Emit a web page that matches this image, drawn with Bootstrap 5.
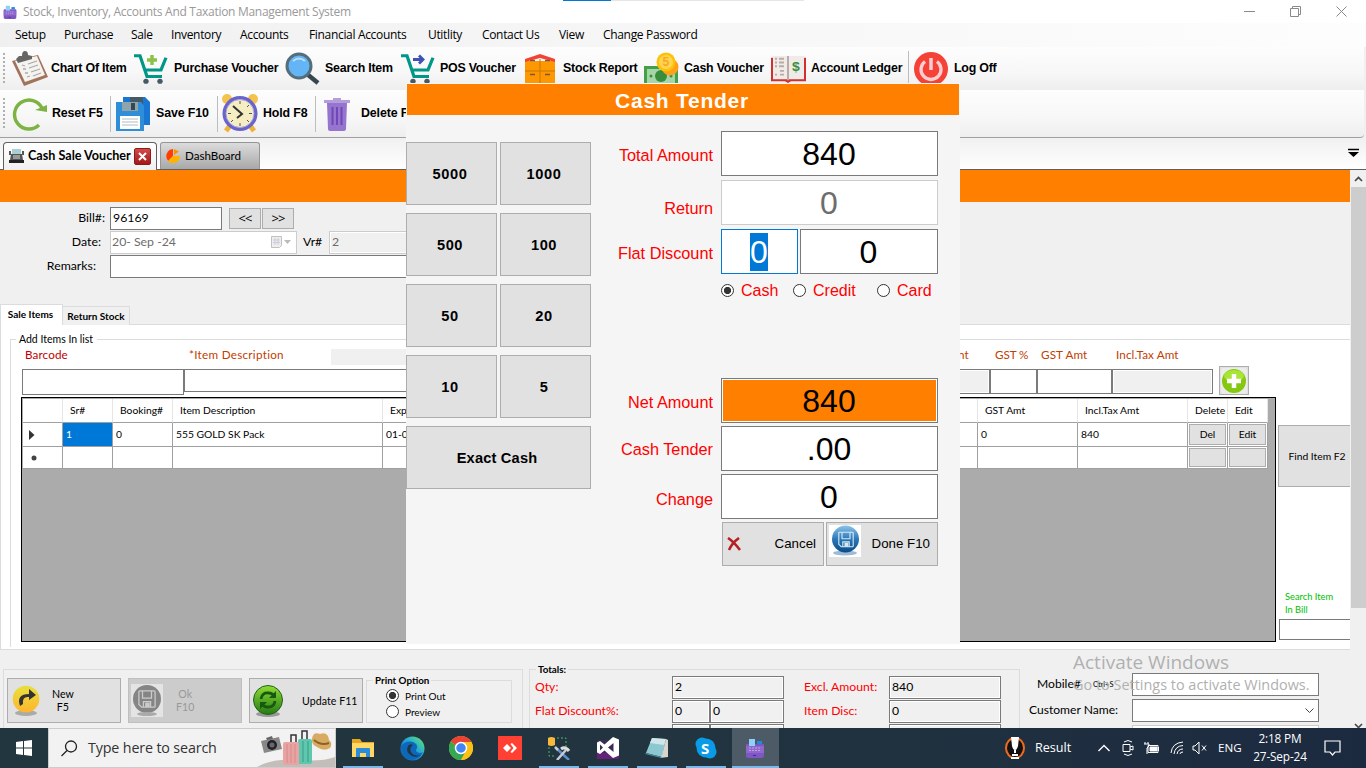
<!DOCTYPE html>
<html lang="en">
<head>
<meta charset="utf-8">
<meta name="viewport" content="width=device-width, initial-scale=1">
<title>Stock, Inventory, Accounts And Taxation Management System</title>
<link href="https://cdn.jsdelivr.net/npm/bootstrap@5.3.0/dist/css/bootstrap.min.css" rel="stylesheet">
<style>
:root{--ui:"Open Sans","Noto Sans",sans-serif;--cal:Lato,"Open Sans",sans-serif;--ms:"Liberation Sans",Arial,sans-serif;--or:#ff8000}
html,body{width:1366px;height:768px;overflow:hidden}
body{font:12.3px/1 var(--cal);color:#000;background:#f0f0f0;margin:0}
svg{display:block;flex:none}
.screen{width:1366px;height:768px}
.titlebar{height:23px;background:#fff;font:12px/1 var(--ui);letter-spacing:-.29px;color:#999;padding-left:3px}
.loadline{left:563px;top:0;width:241px;height:1px;background:linear-gradient(90deg,#0078d7 48px,#e5e5e5 48px)}
.winbtns{margin-left:auto;margin-right:19px;gap:35px}
.menubar{height:24px;padding-left:15px;background:linear-gradient(90deg,#f0f0f0,#fdfdfd);font:12px/1 var(--ui);letter-spacing:-.33px;display:grid;grid-template-columns:49px 67px 40px 69px 69px 119px 54px 77px 44px 120px;align-items:center;white-space:nowrap}
.toolrow{background:linear-gradient(#fdfdfd,#f7f7f7 60%,#eee);font:bold 12.4px/1 var(--ms);letter-spacing:-.22px;white-space:nowrap;width:1364px}
.bar2{letter-spacing:-.12px}
.toolrow .ico{width:40px}
.bar1{height:43px;display:grid;grid-template-columns:11px 122px 152px 115px 123px 121px 127px 137px 6px 1fr}
.bar2{height:48px;border-bottom:1px solid #a0a0a0;border-radius:0 0 4px 0}
.grip{margin-left:3px;height:31px;background:repeating-linear-gradient(#b0b0b0 0 2px,transparent 2px 4px);width:2px}
.tsep{width:1px;height:36px;background:#bdbdbd}
.tabstrip{height:32px;background:linear-gradient(#f0f0f0,#fff);border-bottom:1px solid #5f5f5f;padding:4px 6px 0 3px}
.tab-a{width:154px;height:28px;margin-bottom:-1px;border:1px solid #5f5f5f;border-bottom:0;border-radius:4px 4px 0 0;background:linear-gradient(#fff,#f0f0f0);font:bold 12.6px/1 var(--cal);padding-left:5px}
.tab-b{width:100px;height:27px;margin-left:3px;border:1px solid #969696;border-bottom:0;border-radius:3px 3px 0 0;background:linear-gradient(#dcdcdc,#a8a8a8);padding-left:5px;font:11.6px/1 var(--cal)}
.closebox{width:17px;height:17px;background:linear-gradient(#d24a4a,#a31818);border:1px solid #8b1a1a;border-radius:2px}
.work{height:558px}
.page{width:1350px;background:#f0f0f0;overflow:hidden}
.vscroll{width:16px;background:#f0f0f0}
.thumb{width:15px;height:421px;background:#cdcdcd}
.band{height:32px;background:var(--or);width:1350px;margin-bottom:5px}
.frm{height:23px;margin-bottom:1px;white-space:nowrap}
.lab{text-align:right;width:110px}
.nav-b{font:13px/1 var(--ui);letter-spacing:-1px}
.box{border:1px solid #7a7a7a;background:#fff;display:flex;align-items:center;padding:0 0 0 2px;flex:none}
.ro{background:#f0f0f0;box-shadow:inset 0 0 0 1px #fff}
.dis{border-color:#ccc;color:#6d6d6d}
.b{border:1px solid #adadad;background:#e1e1e1;display:flex;align-items:center;justify-content:center;padding:0;color:#000;flex:none}
.stabs{margin-top:26px;height:21px;font:bold 10px/1 var(--cal)}
.stab1{width:63px;height:21px;background:#fff;border:1px solid #dcdcdc;border-bottom:0;padding:0 2px 3px 0}
.stab2{width:67px;height:19px;background:#f0f0f0;border:1px solid #dcdcdc;border-left:0;border-bottom:0;padding-bottom:1px}
.panel{height:326px;background:#fff;border-bottom:1px solid #dcdcdc;border-left:1px solid #dcdcdc;margin-top:-1px;border-top:1px solid #dcdcdc}
.grp{margin:0 0 0 9px;height:322px;padding-left:1px;background:linear-gradient(#dcdcdc,#dcdcdc) 0 14px/1px 100% no-repeat}
.grp-t{height:28px;font-size:10.5px;width:1340px}
.grp-t:before{content:"";width:5px;height:1px;background:#dcdcdc;margin-right:3px}
.grp-t:after{content:"";flex:1;height:1px;background:#dcdcdc;margin-left:4px}
.flab{height:22px;color:#c04000;font-size:11.7px;letter-spacing:.1px;display:grid;grid-template-columns:164px 142px 627px 37px 46px 75px 100px;padding-left:14px;white-space:nowrap;margin-top:-9px}
.fields{height:31px;padding:3px 0 0 11px}
.dg{margin-left:10px;width:1255px;height:245px;border:1px solid #000;background:#ababab;font-size:10.3px;padding:1px;flex:none}
.dgr{display:grid;grid-template-columns:40px 50px 60px 210px 595px 100px 110px 40px 40px;width:1246px;white-space:nowrap}
.dgr>div{border-right:1px solid #a0a0a0;border-bottom:1px solid #a0a0a0;background:#fff;display:flex;align-items:center;padding-left:3px;overflow:hidden}
.dgh>div{border-right-color:#e5e5e5;padding-left:7px}
.dgr .pb{padding:1px}
.find{width:72px;height:62px;margin-top:28px;border-right:0;font-size:10.3px;padding-left:5px;white-space:nowrap}
.lower{height:78px;padding:19px 0 0 3px;overflow:hidden}
.gb{border:1px solid #dcdcdc;height:80px;flex:none}
.bb{width:114px;height:45px;font-size:10.6px}
.po{width:146px;height:43px;border:1px solid #dcdcdc;font-size:10px;margin:10px 0 0 3px;padding-left:8px}
.leg{background:#f0f0f0;font-weight:bold;font-size:9.8px;line-height:10px;width:max-content;padding:0 2px;margin-top:-6px;white-space:nowrap}
.rd{width:13px;height:13px;border:1px solid #333;border-radius:50%;background:#fff;flex:none}
.rd.on{background:radial-gradient(circle,#333 0 3.2px,#fff 4px)}
.tg{display:grid;grid-template-columns:137px 112px 105px 112px;row-gap:1px;grid-auto-rows:23px;align-items:center;color:#f00;font-size:12.2px;margin-top:2px;padding-left:5px;white-space:nowrap}
.tg .box{height:23px;color:#000;align-self:stretch}
.tg .gap{padding-left:20px}
.cust{margin-left:8px;width:290px;font-size:12.1px;padding-top:4px;white-space:nowrap}
.wm{left:1073px;top:652px;color:#b0b0b0;font-family:var(--ui);white-space:nowrap;pointer-events:none;z-index:5}
.wm .a1{font-size:19px;line-height:20px}
.wm .a2{font-size:14.4px;line-height:20px;margin-top:3px;letter-spacing:.02px}
/* cash tender dialog */
.tender{left:406px;top:83px;width:554px;height:561px;background:#f5f5f5;z-index:10;font-family:var(--ms);padding:1px}
.tender h1{height:31px;background:var(--or);color:#fff;font:bold 21px/1 var(--ms);letter-spacing:.75px;margin:0;padding-top:2px}
.keys{display:grid;grid-template-columns:91px 91px;gap:8px 3px;grid-auto-rows:63px;margin:27px 0 0 -1px;width:185px}
.keys .b{font:bold 14.6px/1 var(--ms);letter-spacing:.6px;padding:2px 3px 0 0}
.keys .wide{grid-column:span 2;letter-spacing:.2px}
.pay{width:217px;margin:16px 0 0 8px}
.plabs{width:122px;color:#f00;font-size:16.3px;text-align:right;white-space:nowrap;padding-top:16px}
.plabs div{height:45px;display:flex;align-items:center;justify-content:flex-end}
.num{height:45px;font-size:32px;justify-content:center;padding:0 1px 0 0}
.modes{color:#f00;font-size:16px;height:20px}
.taskbar{height:40px;background:linear-gradient(90deg,#22363f,#21343f 50%,#1c2a40);color:#fff;font-family:var(--ui)}
.search{width:288px;height:40px;background:#f2f2f2;border:1px solid #ccc;color:#333;font-size:14.3px;letter-spacing:-.15px;padding-left:12px}
.app{width:49px;height:40px;display:flex;align-items:center;justify-content:center;flex:none}
.run{box-shadow:inset 0 -2px #76b9ed;width:40px;margin:0 4.5px}
.act{background:#4d5b66;width:47px;margin:0 0 0 1px}
</style>
</head>
<body>
<svg width="0" height="0" class="position-absolute"><defs>
<linearGradient id="bl" x2="0" y2="1"><stop stop-color="#8cc4e8"/><stop offset=".5" stop-color="#2c78b8"/><stop offset="1" stop-color="#0b4a86"/></linearGradient>
<linearGradient id="ye" x2="0" y2="1"><stop stop-color="#e8e03c"/><stop offset="1" stop-color="#ffb52e"/></linearGradient>
<linearGradient id="gn" x2="0" y2="1"><stop stop-color="#8fdc35"/><stop offset="1" stop-color="#257a14"/></linearGradient>
<linearGradient id="ed" x1="0" y1="1" x2="1" y2="0"><stop stop-color="#0c59a4"/><stop offset=".5" stop-color="#1b9de2"/><stop offset="1" stop-color="#66eb6e"/></linearGradient>
<symbol id="reg" viewBox="0 0 20 20"><path d="M1 7q0-1 1-1h16q1 0 1 1v11q0 2-2 2H3q-2 0-2-2z" fill="#7e57c2"/><path d="M1 8h18v7H1z" fill="#9068cc"/><path d="M4 1h6v7H4z" fill="#8fd0fb"/><path d="M12 3h5v3h-5z" fill="#1e88e5"/><path d="M4 10h12M4 12.500h12" stroke="#b9a3e3" stroke-dasharray="2 1"/><path d="M8 17h3v1H8z" fill="#4527a0"/></symbol>
<symbol id="cart" viewBox="0 0 35 33" preserveAspectRatio="none"><path d="M1 3h6l7 22h15M12 18h16L33 5" fill="none" stroke="#009688" stroke-width="3.200"/><circle cx="13" cy="30" r="2.700" fill="#455a64"/><circle cx="27" cy="30" r="2.700" fill="#455a64"/></symbol>
<symbol id="disk" viewBox="0 0 20 20"><path d="M2 1h16q1 0 1 1v16q0 1-1 1H4l-3-3V2q0-1 1-1zM5 1v8h10V1M6 19v-6h8v6" fill="none" stroke="currentColor" stroke-width="1.400"/><path d="M8 14h5v5H8z" fill="currentColor"/></symbol>
</defs></svg>

<div class="screen d-flex flex-column position-relative">
  <header class="titlebar d-flex align-items-center">
    <svg width="14" height="14"><use href="#reg"/></svg><span style="margin-left:6px">Stock, Inventory, Accounts And Taxation Management System</span>
    <div class="winbtns d-flex align-items-center"><svg width="11" height="11" stroke="#8a8a8a" fill="none"><path d="M0 5.500h11"/></svg><svg width="11" height="11" stroke="#8a8a8a" fill="none"><path d="M.5 2.500h8v8h-8zM2.500 2V.5h8v8H9"/></svg><svg width="11" height="11" stroke="#8a8a8a" fill="none"><path d="M.5.5l10 10M10.500.5l-10 10"/></svg></div>
    <div class="loadline position-absolute"></div>
  </header>
  <nav class="menubar"><span>Setup</span><span>Purchase</span><span>Sale</span><span>Inventory</span><span>Accounts</span><span>Financial Accounts</span><span>Utitlity</span><span>Contact Us</span><span>View</span><span>Change Password</span></nav>

  <div class="toolrow bar1 align-items-center">
    <div class="grip"></div>
    <div class="d-flex align-items-center"><div class="ico"><svg width="38" height="37" viewBox="0 0 38 37"><path d="M1 11L27 5l10 22-24 9z" fill="#a1735b"/><path d="M4 11l22-5 8 19-20 7z" fill="#f5f3f0"/><path d="M5 9l3-3 3 0q0-5 3-5t3 4l4 1 0 3-14 4z" fill="#666"/><path d="M11 15l3 1M17 14l9-3M12 19l3 0M18 18l9-3M14 23l3 0M20 22l9-3M16 27l3-1M22 26l8-3" stroke="#aaa" stroke-width="1.300"/></svg></div>Chart Of Item</div>
    <div class="d-flex align-items-center"><div class="ico"><svg width="35" height="31"><use href="#cart" width="35" height="31"/><path d="M19 2v10M14 7h10" stroke="#8bc34a" stroke-width="3.500"/></svg></div><span style="margin-left:1px">Purchase Voucher</span></div>
    <div class="d-flex align-items-center"><div class="ico"><svg width="35" height="35"><path d="M22 23l11 9" stroke="#37474f" stroke-width="4.500"/><circle cx="14" cy="15" r="12" fill="#64b5f6" stroke="#546e7a" stroke-width="3"/><path d="M8 10q6-5 12 0" stroke="#bbdefb" stroke-width="2" fill="none"/></svg></div>Search Item</div>
    <div class="d-flex align-items-center"><div class="ico"><svg width="35" height="31"><use href="#cart" width="35" height="31"/><path d="M13 6.500h10M19 2.500l4 4-4 4" stroke="#3f51b5" stroke-width="2.800" fill="none"/></svg></div>POS Voucher</div>
    <div class="d-flex align-items-center"><div class="ico"><svg width="31" height="30" style="margin-left:2px"><path d="M0 7h30v25H0z" fill="#ff9800"/><path d="M0 8V5l15-5 15 5v3L15 4z" fill="#f44336"/><path d="M15 5v27M0 17h30" stroke="#c77600"/><path d="M5 6.500h5M20 6.500h5M5 20.500h5M20 20.500h5" stroke="#795548" stroke-width="1.500"/></svg></div>Stock Report</div>
    <div class="d-flex align-items-center"><div class="ico"><svg width="35" height="34"><path d="M0 14h34v20H0z" fill="#43a047"/><path d="M3 17h28v17H3z" fill="#a5d6a7"/><circle cx="17" cy="24" r="6" fill="#388e3c"/><circle cx="7" cy="24" r="1.500" fill="#388e3c"/><circle cx="27" cy="24" r="1.500" fill="#388e3c"/><circle cx="26" cy="15" r="8.500" fill="#ff9f1a"/><circle cx="22" cy="10" r="9.500" fill="#ffc107"/><circle cx="22" cy="10" r="7" fill="#ffd54f"/><text x="18.500" y="14" font-size="12" fill="#f9a825">5</text></svg></div>Cash Voucher</div>
    <div class="d-flex align-items-center"><div class="ico"><svg width="36" height="28" viewBox="1 0 36 30" preserveAspectRatio="none"><path d="M0 3h36v25H21l-3 2-3-2H0z" fill="#d32f2f"/><path d="M3 1h14v25H3zM19 1h15v25H19z" fill="#efebe9"/><path d="M17 1h2v26h-2z" fill="#bcaaa4"/><path d="M5 4h2M9 4h5M5 8h2M9 8h5M5 12h2M9 12h5M5 21h2M10 17h4M10 21h4" stroke="#bcaaa4" stroke-width="2"/><text x="22" y="17" font-size="14" fill="#388e3c">$</text></svg></div>Account Ledger</div>
    <div class="tsep"></div>
    <div class="d-flex align-items-center"><div class="ico"><svg width="34" height="34"><circle cx="17" cy="17" r="17" fill="#f44336"/><path d="M11 9.500a10 10 0 1 0 12 0" stroke="#ffcdd2" stroke-width="3.300" fill="none"/><path d="M17 6v12" stroke="#ffcdd2" stroke-width="3.500"/></svg></div>Log Off</div>
  </div>
  <div class="toolrow bar2 d-flex align-items-center">
    <div class="grip me-1"></div>
    <div class="ico" style="margin-left:3px"><svg width="36" height="35" viewBox="1 0 36 35"><path d="M28 29a14.500 14.500 0 1 1 3-17" stroke="#7cb342" stroke-width="3.400" fill="none"/><path d="M24 14l12-5v-2v9z" fill="#7cb342"/></svg></div><span style="width:58px">Reset F5</span>
    <div class="tsep me-1"></div><div class="ico ms-1"><svg width="34" height="34" viewBox="0 0 34 34" style="margin-left:-3px"><path d="M7 0h22l5 5v23H7z" fill="#1976d2"/><path d="M14 0h13v7H14z" fill="#455a64"/><path d="M0 5h25l3 4v25H0z" fill="#2f8ed8"/><path d="M6 5h16v9H6z" fill="#90a4ae"/><path d="M15 6h4v7h-4z" fill="#37474f"/><path d="M4 19h20v13H4z" fill="#fff"/><path d="M6 22h16M6 25h16M6 28h16" stroke="#b0bec5"/></svg></div><span style="width:57px;margin-left:-3px">Save F10</span>
    <div class="tsep" style="margin-left:4px"></div><div class="ico" style="margin:0 2px 0 3px"><svg width="38" height="39"><circle cx="6" cy="5" r="5" fill="#f4c34d"/><circle cx="32" cy="5" r="5" fill="#f4c34d"/><path d="M5 37l5-7M33 37l-5-7" stroke="#efb33d" stroke-width="5"/><circle cx="19" cy="19.500" r="17.500" fill="#6a63c9"/><circle cx="19" cy="19.500" r="14" fill="#f5eec2" stroke="#a9a3e6"/><path d="M12 12l9 8-5 4" stroke="#333" stroke-width="2" fill="none"/><path d="M19 7v3M19 29v3M7 19.500h3M28 19.500h3M28 11l-2 2M10 28l2-2M28 28l-2-2" stroke="#555"/></svg></div><span style="width:52px">Hold F8</span>
    <div class="tsep"></div><div class="ico" style="margin-left:8px;width:37px"><svg width="26" height="34"><path d="M3 6h20l-1 26q0 2-2 2H6q-2 0-2-2z" fill="#9575cd"/><path d="M0 3h26v3H0zM9 1h8v3H9z" fill="#b39ddb"/><path d="M8.500 10v18M13 10v18M17.500 10v18" stroke="#7347b8" stroke-width="2"/></svg></div><span>Delete F</span>
  </div>
  <div class="tabstrip d-flex">
    <div class="tab-a d-flex align-items-center"><svg width="15" height="15"><path d="M3 0h9v5H3z" fill="#a9cfd4"/><path d="M0 2h2v4H0zM13 2h2v4h-2zM2 5h11l1 6H1z" fill="#555"/><path d="M0 11h15v3H0z" fill="#222"/><path d="M4 7h7M4 9h7" stroke="#ddd"/></svg><span style="width:110px;padding-left:4px;white-space:nowrap">Cash Sale Voucher</span><div class="closebox d-flex align-items-center justify-content-center"><svg width="9" height="9"><path d="M1 1l7 7M8 1L1 8" stroke="#fff" stroke-width="2"/></svg></div></div>
    <div class="tab-b d-flex align-items-center"><svg width="14" height="14"><path d="M7 7V0a7 7 0 0 0-4.500 12z" fill="#ff3d00"/><path d="M7 7l-5 5A7 7 0 0 0 14 7z" fill="#ffb300"/><path d="M8 6V0l5 2.500z" fill="#ff9100"/></svg><span style="padding-left:5px">DashBoard</span></div>
    <svg class="ms-auto mt-1" width="13" height="13"><path d="M1 3.500h11" stroke="#000" stroke-width="1.500"/><path d="M1 6h11l-5.500 5z"/></svg>
  </div>

  <main class="work d-flex">
    <div class="page">
      <div class="band"></div>
      <div class="frm d-flex align-items-center"><span class="lab" style="padding-right:5px">Bill#:</span><div class="box h-100" style="width:112px">96169</div><button class="b nav-b" style="width:32px;height:21px;margin-left:7px">&lt;&lt;</button><button class="b nav-b" style="width:32px;height:21px;margin-left:1px">&gt;&gt;</button></div>
      <div class="frm d-flex align-items-center"><span class="lab" style="padding-right:9px">Date:</span><div class="box dis h-100" style="width:187px;padding-left:1px">20- Sep -24<svg class="ms-auto me-1" width="22" height="13"><path d="M1.500.5h10v9l-2 2h-8z" fill="#eee" stroke="#c5bfc0"/><path d="M3 4h7M3 6.500h7M5 2v7M8 2v7" stroke="#ccd"/><path d="M14 4h7l-3.500 4z" fill="#bbb"/></svg></div><span style="width:32px;padding-left:6px">Vr#</span><div class="box dis ro h-100" style="width:200px">2</div></div>
      <div class="frm d-flex align-items-center"><span class="lab" style="padding-right:14px">Remarks:</span><div class="box h-100" style="width:400px"></div></div>
      <div class="stabs d-flex align-items-end"><div class="stab1 d-flex align-items-center justify-content-center">Sale Items</div><div class="stab2 d-flex align-items-center justify-content-center">Return Stock</div></div>
      <div class="panel d-flex">
        <div style="width:1277px">
          <div class="grp">
            <div class="grp-t d-flex align-items-center">Add Items In list</div>
            <div class="flab align-items-center"><span style="color:#c00000">Barcode</span><span style="letter-spacing:.27px">*Item Description</span><div style="height:16px;background:#f0f0f0;width:100px;margin-top:3px"></div><span>nt</span><span style="letter-spacing:-.1px">GST %</span><span>GST Amt</span><span>Incl.Tax Amt</span></div>
            <div class="fields d-flex"><div class="box" style="width:162px;height:26px"></div><div class="box" style="width:600px;height:23px"></div><div class="box ro" style="width:206px;height:25px"></div><div class="box" style="width:47px;height:25px"></div><div class="box" style="width:75px;height:25px"></div><div class="box ro" style="width:101px;height:25px"></div><div class="b" style="width:30px;height:29px;margin:-3px 0 0 6px"><svg width="26" height="26"><rect width="26" height="26" rx="3" fill="#ececec"/><circle cx="13" cy="13" r="12" fill="#84c810"/><ellipse cx="13" cy="8" rx="10" ry="6" fill="#a9e534"/><path d="M13 6v14M6 13h14" stroke="#fff" stroke-width="4.500"/></svg></div></div>
            <div class="dg" >
              <div class="dgr dgh" style="grid-auto-rows:24px"><div></div><div>Sr#</div><div>Booking#</div><div>Item Description</div><div>Exp</div><div>GST Amt</div><div>Incl.Tax Amt</div><div>Delete</div><div>Edit</div></div>
              <div class="dgr" style="grid-auto-rows:24px"><div style="padding-left:6px"><svg width="6" height="10"><path d="M0 0l5.500 5L0 10z" fill="#333"/></svg></div><div style="background:#0078d7;color:#fff">1</div><div>0</div><div>555 GOLD SK Pack</div><div>01-0</div><div>0</div><div>840</div><div class="pb"><span class="b w-100 h-100">Del</span></div><div class="pb"><span class="b w-100 h-100">Edit</span></div></div>
              <div class="dgr" style="grid-auto-rows:22px"><div style="padding-left:8px"><svg width="6" height="6"><circle cx="3" cy="3" r="2.500" fill="#444"/></svg></div><div></div><div></div><div></div><div></div><div></div><div></div><div class="pb"><span class="b w-100 h-100"></span></div><div class="pb"><span class="b w-100 h-100"></span></div></div>
            </div>
          </div>
        </div>
        <div style="padding-top:72px"><div class="b find">Find Item F2</div><div style="margin:103px 0 0 7px;color:#00c000;font-size:9.3px;line-height:13px">Search Item<br>In Bill</div><div class="box" style="width:76px;height:21px;margin:3px 0 0 1px"></div></div>
      </div>
      <div class="lower d-flex">
        <div class="gb d-flex" style="width:520px;padding-left:3px">
          <div class="b bb justify-content-start" style="margin-top:8px"><svg class="ms-1" width="30" height="34"><ellipse cx="14" cy="29" rx="11" ry="3" fill="#aaa"/><circle cx="14" cy="15" r="13.300" fill="url(#ye)"/><path d="M8 22q-4-12 9-12V5l7 6-7 5v-3q-7-1-6 7z" fill="#333"/></svg><span class="text-center" style="margin-left:10px;line-height:13px">New<br>F5</span></div>
          <div class="b bb justify-content-start" style="margin:8px 0 0 7px;background:#ccc;border-color:#bfbfbf;color:#999"><svg width="33" height="34" style="margin-left:2px"><path d="M0 0h32v33H0z" fill="#e4e4e4"/><circle cx="16" cy="15" r="14" fill="#858585"/><ellipse cx="16" cy="30" rx="10" ry="2" fill="#aaa"/><svg x="7" y="6" width="18" height="18" color="#ccc"><use href="#disk"/></svg></svg><span class="text-center" style="margin-left:12px;line-height:13px">Ok<br>F10</span></div>
          <div class="b bb justify-content-start" style="margin:8px 0 0 7px"><svg width="32" height="34" style="margin-left:2px"><ellipse cx="16" cy="30" rx="12" ry="3" fill="#999"/><circle cx="16" cy="16" r="14.500" fill="url(#gn)" stroke="#21621b"/><path d="M9 15q1-7 8-6 3 0 5 3M23 17q-1 7-8 6-3 0-5-3" stroke="#175910" stroke-width="2.800" fill="none"/><path d="M24 7v7h-7zM8 25v-7h7z" fill="#175910"/></svg><span style="margin-left:18px;padding-top:1px;letter-spacing:.05px">Update F11</span></div>
          <div class="po"><div class="leg" style="margin-left:-2px">Print Option</div><div class="d-flex align-items-center" style="margin:4px 0 0 11px;gap:6px"><i class="rd on"></i>Print Out</div><div class="d-flex align-items-center" style="margin:3px 0 0 11px;gap:6px"><i class="rd"></i>Preview</div></div>
        </div>
        <div class="gb" style="width:491px;margin-left:6px"><div class="leg" style="margin-left:6px">Totals:</div>
          <div class="tg"><span>Qty:</span><div class="box ro">2</div><span class="gap">Excl. Amount:</span><div class="box ro">840</div>
          <span>Flat Discount%:</span><div class="d-flex"><div class="box ro" style="width:38px">0</div><div class="box ro" style="width:74px">0</div></div><span class="gap">Item Disc:</span><div class="box ro">0</div>
          <span></span><div class="d-flex"><div class="box ro" style="width:38px"></div><div class="box ro" style="width:74px"></div></div><span></span><div class="box ro"></div></div>
        </div>
        <div class="cust" style="margin-left:9px"><div class="d-flex align-items-center" style="height:23px"><span style="width:56px;padding-left:8px">Mobile#</span><span style="font-size:7.500px;width:47px;padding-left:8px">Ctrl+S</span><div class="box h-100" style="width:187px"></div></div>
          <div class="d-flex align-items-center" style="height:23px;margin-top:3px"><span style="width:103px">Customer Name:</span><div class="box h-100 justify-content-end pe-1" style="width:187px"><svg width="9" height="6"><path d="M.5.5l4 4 4-4" stroke="#444" fill="none"/></svg></div></div>
          <div class="box dis" style="height:23px;margin:3px 0 0 103px;width:187px"></div></div>
      </div>
    </div>
    <div class="vscroll d-flex flex-column align-items-center"><svg width="9" height="17"><path d="M1 11l3.500-3.500L8 11" stroke="#444" stroke-width="1.600" fill="none"/></svg><div class="thumb"></div><svg class="mt-auto" width="9" height="5"><path d="M1 1l3.500 3.500L8 1" stroke="#444" stroke-width="1.600" fill="none"/></svg></div>
  </main>

  <footer class="taskbar d-flex align-items-center">
    <div class="d-flex justify-content-center" style="width:48px"><svg width="16" height="16" fill="#fff"><path d="M0 2l7-1v6.500H0zM8 1l8-1v7.500H8zM0 8.500h7V15l-7-1zM8 8.500h8V16l-8-1z"/></svg></div>
    <div class="search d-flex align-items-center"><svg width="17" height="17" fill="none" stroke="#222" stroke-width="1.300"><circle cx="10" cy="6.500" r="5.500"/><path d="M6 10.500L.5 16"/></svg><span style="margin-left:10px">Type here to search</span>
      <svg class="ms-auto" width="78" height="38"><path d="M0 38q15-9 40-7t38-3v10z" fill="#c4beba"/><path d="M4 12l18-4 3 12-18 4z" fill="#888"/><path d="M9 9l6-2 1 3-6 1z" fill="#666"/><circle cx="15" cy="16" r="5" fill="#222"/><circle cx="15" cy="16" r="2.500" fill="#667"/><path d="M34 14V6h5v8M45 12V2h5v10" stroke="#333" stroke-width="1.500" fill="none"/><rect x="41" y="10" width="14" height="25" rx="2" fill="#5fc7ad"/><rect x="26" y="13" width="16" height="23" rx="2" fill="#e9a3a3"/><path d="M30 15v19M34 15v19M38 15v19" stroke="#d48c8c"/><path d="M46 12v21M51 12v21" stroke="#399c87"/><path d="M55 10q1-8 8-5 8-3 9 6 4 3 1 8-6 4-13-1-6-3-5-8z" fill="#d8ab62"/><path d="M57 11q7 6 15 3" stroke="#8d6025" stroke-width="2" fill="none"/></svg></div>
    <div class="app run" style="margin-left:7px"><svg width="22" height="20"><path d="M0 1h8l2 3h12v15H0z" fill="#e7a61f"/><path d="M0 5h22v14H0z" fill="#ffd767"/><path d="M4 19v-8q0-1 1-1h12q1 0 1 1v8h-4v-4H8v4z" fill="#2b8cd8"/></svg></div>
    <div class="app"><svg width="25" height="25"><circle cx="12.500" cy="12.500" r="12" fill="url(#ed)"/><path d="M1 10q5-6 12-4 5 2 4 6-2 3 0 4 3 2 6 0-4 8-12 8Q1 21 1 10z" fill="#0c67bd"/><path d="M13 9q-4 3-2 7 3 5 10 3-4 3-9 1-7-4-4-10 2-3 5-1z" fill="#22363f"/></svg></div>
    <div class="app"><svg width="24" height="24"><circle cx="12" cy="12" r="12" fill="#fbc116"/><path d="M12 12L1.600 6A12 12 0 0 1 22.400 6H12z" fill="#ea4335"/><path d="M1.600 6A12 12 0 0 0 12 24l5-9-5-3z" fill="#34a853"/><path d="M12 6h10.400A12 12 0 0 1 12 24l5-9z" fill="#fbc116"/><circle cx="12" cy="12" r="5.500" fill="#4285f4" stroke="#fff" stroke-width="1.500"/></svg></div>
    <div class="app"><svg width="24" height="24"><path d="M0 0h24v24H0z" fill="#ff4033"/><path d="M9 8l4 4-4 4-4-4zM12.500 8l1.500-1 5 5-5 5-1.500-1 3-4z" fill="#fff"/></svg></div>
    <div class="app run"><svg width="24" height="24"><path d="M10 2h9v9M2 11v9h6" stroke="#4b6" stroke-dasharray="2 2" fill="none"/><path d="M1 2q3-2 7 0v7q-4 2-7 0z" fill="#f6b93b"/><path d="M10 13l12 11" stroke="#5b8fd0" stroke-width="2.500"/><path d="M19 14L10 24M8 11l3 3" stroke="#c9ccd0" stroke-width="2.500"/><path d="M14 13q4-3 8 2" stroke="#ddd" stroke-width="3" fill="none"/></svg></div>
    <div class="app run"><svg width="22" height="22"><path d="M0 16h22v6H0z" fill="#68217a"/><path d="M0 3h22v15H0z" fill="#68217a" opacity=".35"/><path d="M16 0l6 2.500v16L16 21 7.500 13.500 3 17l-3-1.500v-10L3 4l4.500 3.500zM16.500 6L11 10.500l5.500 4.500zM3 7.500v6l3-3z" fill="#fff" fill-rule="evenodd"/></svg></div>
    <div class="app run"><svg width="24" height="24"><path d="M7 2l14 1-4 18L1 17z" fill="#8cc8d2"/><path d="M7 2l14 1-2 6L5 7z" fill="#cfe6e9"/><path d="M21 3l2 1v17l-8 1 2-3z" fill="#d8d5cd"/><path d="M1 17l16 4-1 1L0 18z" fill="#4b8a96"/></svg></div>
    <div class="app run"><svg width="22" height="22"><circle cx="11" cy="11" r="9.500" fill="#0a9be8"/><circle cx="7" cy="7" r="6.500" fill="#0a9be8"/><circle cx="15" cy="15" r="6.500" fill="#0a9be8"/><text x="6" y="16.500" font-size="15" font-weight="700" fill="#fff">S</text></svg></div>
    <div class="app run act"><svg width="20" height="20"><use href="#reg"/></svg></div>
    <div class="d-flex align-items-center ms-auto" style="font-size:12.600px">
      <svg width="20" height="24"><ellipse cx="10" cy="12" rx="9" ry="10" fill="#111" stroke="#f26a1b" stroke-width="2"/><path d="M6 1h8l-1 9q-1 4-3 4t-3-4zM9 14h2l0 3H9zM7 18h6v2H7zM6 21h8v2H6z" fill="#fff"/></svg><span style="width:72px;padding-left:10px">Result</span>
      <svg width="14" height="8" fill="none" stroke="#fff"><path d="M1.500 7L7 1.500 12.500 7" stroke-width="1.400"/></svg>
      <svg style="margin-left:10px" width="14" height="18" fill="none" stroke="#fff"><path d="M3 3q4-3 8 0M3 15q4 3 8 0M2 5.500h7v7H2zM9 8l3-1v4l-3-1"/></svg>
      <svg style="margin-left:8px" width="18" height="14" fill="none" stroke="#fff"><path d="M5 4.500h10v7H5zM15.500 6v4M2 1v2M5 1v2M1 3h5v2L4 7v6"/><path d="M7 6h7v4H7z" fill="#fff"/></svg>
      <svg style="margin-left:9px" width="15" height="14" fill="none" stroke="#fff"><path d="M1 12Q2 2 13 1M4 13Q5 5 13 4.500M7 13q1-5 6-5M10 13q0-2 3-2"/></svg>
      <svg style="margin-left:7px" width="16" height="14" fill="none" stroke="#fff"><path d="M1 5h2l4-4v12L3 9H1zM10 4.500l4 5M14 4.500l-4 5"/></svg>
      <span style="width:34px;margin-left:10px;font-size:11.600px">ENG</span>
      <span class="text-center" style="width:56px;font-size:11.800px;line-height:18px;letter-spacing:-.15px;white-space:nowrap;margin-top:-3px">2:18 PM<br>27-Sep-24</span>
      <svg style="margin:0 25px 0 16px" width="17" height="16" fill="none" stroke="#fff" stroke-width="1.200"><path d="M1 1h15v11h-5l-2.500 3L6 12H1z"/></svg>
    </div>
  </footer>

  <div class="wm position-absolute"><div class="a1">Activate Windows</div><div class="a2">Go to Settings to activate Windows.</div></div>

  <section class="tender position-absolute">
    <h1 class="d-flex align-items-center justify-content-center" style="padding-right:2px">Cash Tender</h1>
    <div class="d-flex">
      <div class="keys"><button class="b">5000</button><button class="b">1000</button><button class="b">500</button><button class="b">100</button><button class="b">50</button><button class="b">20</button><button class="b">10</button><button class="b">5</button><button class="b wide">Exact Cash</button></div>
      <div class="plabs"><div style="margin-top:2px">Total Amount</div><div style="margin-top:8px">Return</div><div>Flat Discount</div><div style="margin-top:104px">Net Amount</div><div style="margin-top:2px">Cash Tender</div><div style="margin-top:5px">Change</div></div>
      <div class="pay">
        <div class="box num">840</div>
        <div class="box num dis" style="margin-top:4px">0</div>
        <div class="d-flex" style="margin-top:4px;gap:2px"><div class="box num" style="width:77px;border-color:#0078d7"><span style="background:#0078d7;color:#fff;line-height:38px">0</span></div><div class="box num flex-fill">0</div></div>
        <div class="modes d-flex align-items-center" style="margin-top:6px"><i class="rd on"></i><span style="width:59px;padding:1px 0 0 7px">Cash</span><i class="rd"></i><span style="width:71px;padding:1px 0 0 7px">Credit</span><i class="rd"></i><span style="padding:1px 0 0 7px">Card</span></div>
        <div class="box num" style="margin-top:78px;background:var(--or);box-shadow:inset 0 0 0 1px #fff">840</div>
        <div class="box num" style="margin-top:3px">.00</div>
        <div class="box num" style="margin-top:3px">0</div>
        <div class="d-flex" style="margin:3px 0 0 1px;gap:2px;font-size:13.3px"><button class="b justify-content-between" style="width:102px;height:44px;padding:0 7px 0 4px"><svg width="14" height="14"><path d="M1 1q6 4 12 12M12 1Q5 6 2 13" stroke="#b52025" stroke-width="2.600" fill="none"/></svg>Cancel</button><button class="b justify-content-between" style="width:112px;height:44px;padding:0 7px 0 2px"><svg width="32" height="32" style="margin-top:-6px"><path d="M0 0h32v32H0z" fill="#fff"/><ellipse cx="16" cy="28" rx="12" ry="2.500" fill="#9cbbd6"/><circle cx="16.500" cy="14" r="13.500" fill="url(#bl)"/><svg x="9" y="6" width="16" height="17" color="#d3e9f7"><use href="#disk"/></svg></svg>Done F10</button></div>
      </div>
    </div>
  </section>
</div>
<script src="https://cdn.jsdelivr.net/npm/bootstrap@5.3.0/dist/js/bootstrap.bundle.min.js"></script>
</body>
</html>
